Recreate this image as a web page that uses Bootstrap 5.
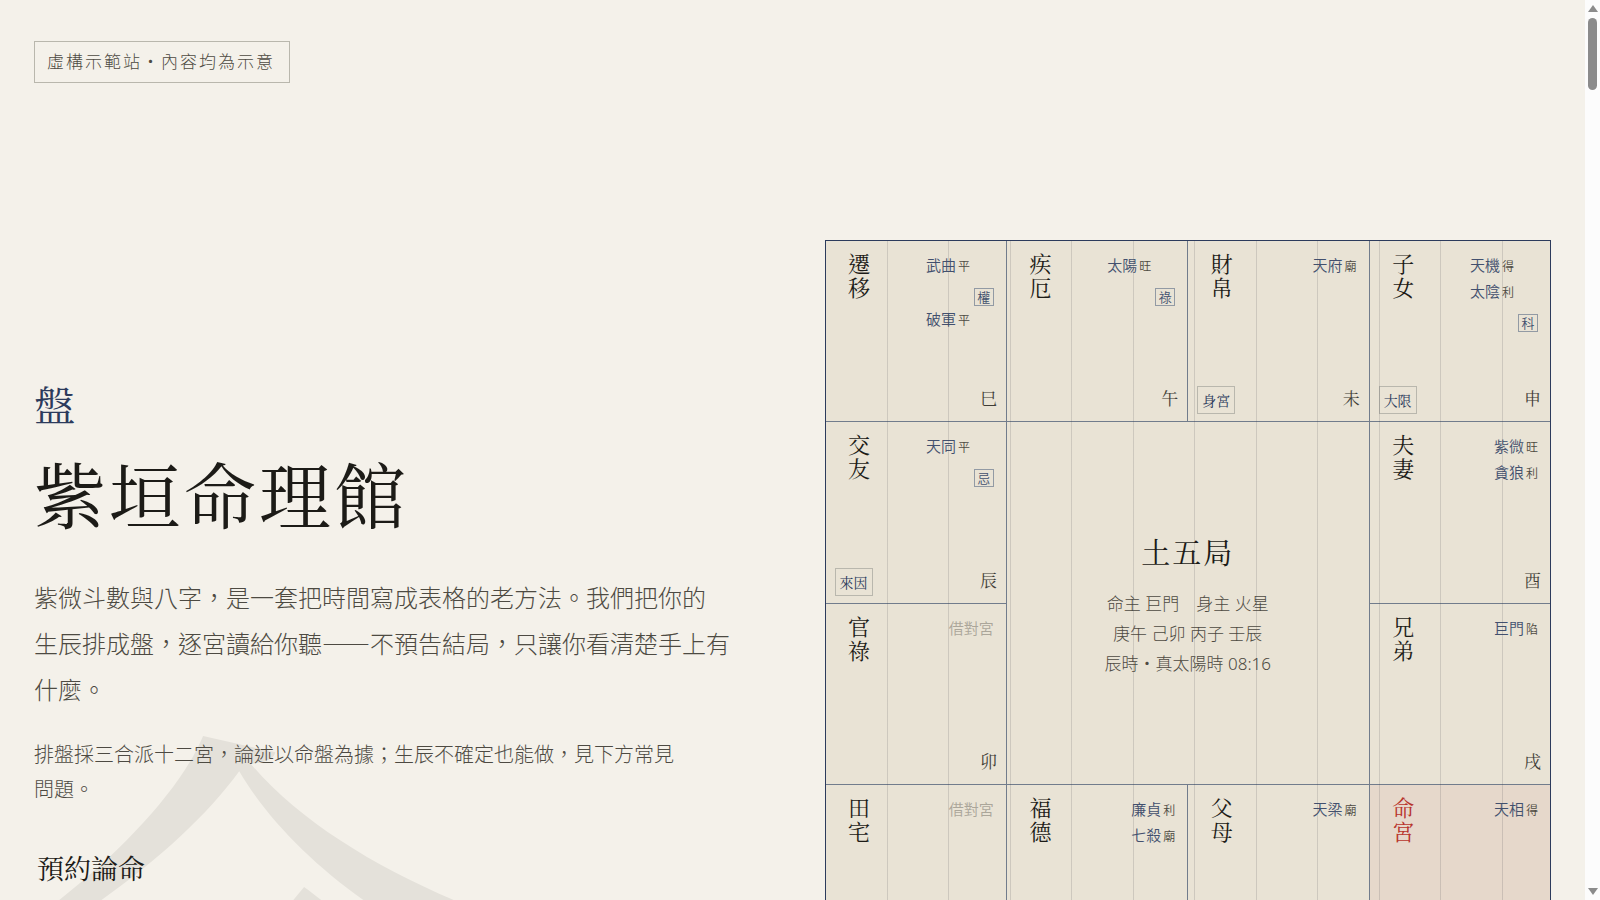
<!DOCTYPE html>
<html lang="zh-Hant">
<head>
<meta charset="utf-8">
<meta name="viewport" content="width=device-width, initial-scale=1">
<title>紫垣命理館</title>
<link rel="stylesheet" href="https://cdn.jsdelivr.net/npm/bootstrap@5.3.0/dist/css/bootstrap.min.css">
<style>
:root {
  --paper: #f4f1ea; --board: #e9e3d5; --ink: #1c1b17; --soft: #4d4a42;
  --navy: #2c3b5c; --rule: #717c8c; --hair: #b9b7ad; --seal: #b8352d;
  --serif: "Noto Serif CJK TC", "Noto Serif TC", "Noto Sans CJK TC", serif;
}
body { background: var(--paper); color: var(--ink); font-family: "Noto Sans CJK TC", sans-serif; font-weight: 300; }
.song { font-family: var(--serif); font-weight: 400; }
.stage { isolation: isolate; }
.notice { border: 1px solid var(--hair); color: var(--soft); font-size: 17px; line-height: 38px; letter-spacing: 2px; padding: 0 14px 2px 12px; margin: 41px 0 0 34px; }
.hero { grid-template-columns: minmax(0, 1fr) minmax(0, 1fr); column-gap: 64px; padding: 0 34px; margin-top: 157px; }
.intro { padding-top: 134px; }
.emblem { font-size: 41px; line-height: 60px; color: var(--navy); }
.site-title { font-size: 72px; line-height: 96px; letter-spacing: 3px; margin: 10px 0 34px; }
.lede { font-size: 24px; line-height: 46px; color: var(--soft); margin-bottom: 24px; }
.note { font-size: 20px; line-height: 35px; color: var(--soft); margin-bottom: 42px; }
.cta { font-size: 27px; line-height: 40px; color: var(--ink); padding: 0 3px; }
.watermark { left: -79px; top: 683px; font-size: 612px; line-height: 1; color: #e4e1da; z-index: -1; }
.chart { border: 1px solid var(--navy); background: var(--rule); aspect-ratio: 1; grid-template: repeat(4, minmax(0, 1fr)) / repeat(4, minmax(0, 1fr)); gap: 1px; }
.chart::after { content: ""; position: absolute; inset: 0; pointer-events: none;
  background: repeating-linear-gradient(90deg, transparent 0 61px, rgba(60, 60, 70, .16) 61px 62px, transparent 62px 122px, rgba(60, 60, 70, .16) 122px 123px); }
.palace { background: var(--board); padding: 12px 12px 6px; }
.palace.self { background: #e6d8cb; }
.palace.self h2 { color: var(--seal); }
.palace h2 { writing-mode: vertical-rl; font-size: 22px; line-height: 42px; letter-spacing: 2px; margin: 0; }
.stars { font-size: 15px; line-height: 26px; font-weight: 350; color: #42506e; margin-top: -1px; }
.stars.wide { width: 68px; }
.stars small { font-size: 12px; line-height: 1; color: var(--soft); margin-left: 2px; }
.stars .hua { border: 1px solid #929aa4; width: 20px; height: 18px; font-size: 13px; line-height: 16px; text-align: center; margin: 10px 0 0 auto; }
.stars .empty { color: #aba69a; }
.foot { margin: auto -3px 0; }
.branch { font-size: 17px; line-height: 34px; color: #3f3d36; }
.mark-tag { border: 1px solid var(--hair); font-size: 14px; line-height: 26px; color: var(--navy); padding: 0 4px; margin-top: 4px; }
.centre { grid-area: 2 / 2 / 4 / 4; background: var(--board); font: 300 17px/30px "Noto Sans", "Noto Sans CJK TC", sans-serif; color: var(--soft); }
.centre h2 { font-size: 29px; line-height: 44px; letter-spacing: 2px; color: var(--ink); margin: 2px 0 15px; }
.scroll-rail { width: 15px; background: #fcfcfc; padding: 5px 0; }
.scroll-thumb { width: 9px; height: 72px; border-radius: 5px; background: #8b8b8b; margin: 6px 0 auto; }
</style>
</head>
<body>
<div class="d-flex vh-100 overflow-hidden">
  <main class="stage position-relative flex-grow-1 overflow-hidden">
    <span class="watermark song position-absolute" aria-hidden="true">命</span>
    <div class="d-flex"><div class="notice">虛構示範站・內容均為示意</div></div>
    <div class="hero d-grid align-items-start">
      <section class="intro">
        <div class="emblem song">盤</div>
        <h1 class="site-title song">紫垣命理館</h1>
        <p class="lede">紫微斗數與八字，是一套把時間寫成表格的老方法。我們把你的<br>生辰排成盤，逐宮讀給你聽——不預告結局，只讓你看清楚手上有<br>什麼。</p>
        <p class="note">排盤採三合派十二宮，論述以命盤為據；生辰不確定也能做，見下方常見<br>問題。</p>
        <a class="cta song d-inline-block text-decoration-none" href="#booking">預約論命</a>
      </section>
      <section class="chart d-grid position-relative" aria-label="命盤">
        <article class="palace d-flex flex-column">
          <div class="d-flex justify-content-between align-items-start"><h2 class="song">遷移</h2>
            <ul class="stars wide list-unstyled mb-0"><li>武曲<small>平</small><div class="hua">權</div></li><li>破軍<small>平</small></li></ul></div>
          <div class="foot d-flex align-items-center"><span class="branch song ms-auto">巳</span></div>
        </article>
        <article class="palace d-flex flex-column">
          <div class="d-flex justify-content-between align-items-start"><h2 class="song">疾厄</h2>
            <ul class="stars wide list-unstyled mb-0"><li>太陽<small>旺</small><div class="hua">祿</div></li></ul></div>
          <div class="foot d-flex align-items-center"><span class="branch song ms-auto">午</span></div>
        </article>
        <article class="palace d-flex flex-column">
          <div class="d-flex justify-content-between align-items-start"><h2 class="song">財帛</h2>
            <ul class="stars list-unstyled mb-0"><li>天府<small>廟</small></li></ul></div>
          <div class="foot d-flex align-items-center"><span class="mark-tag song">身宮</span><span class="branch song ms-auto">未</span></div>
        </article>
        <article class="palace d-flex flex-column">
          <div class="d-flex justify-content-between align-items-start"><h2 class="song">子女</h2>
            <ul class="stars wide list-unstyled mb-0"><li>天機<small>得</small></li><li>太陰<small>利</small><div class="hua">科</div></li></ul></div>
          <div class="foot d-flex align-items-center"><span class="mark-tag song">大限</span><span class="branch song ms-auto">申</span></div>
        </article>
        <article class="palace d-flex flex-column">
          <div class="d-flex justify-content-between align-items-start"><h2 class="song">交友</h2>
            <ul class="stars wide list-unstyled mb-0"><li>天同<small>平</small><div class="hua">忌</div></li></ul></div>
          <div class="foot d-flex align-items-center"><span class="mark-tag song">來因</span><span class="branch song ms-auto">辰</span></div>
        </article>
        <div class="centre d-flex flex-column align-items-center justify-content-center">
          <h2 class="song">土五局</h2>
          <div>命主 巨門　身主 火星</div>
          <div>庚午 己卯 丙子 壬辰</div>
          <div>辰時・真太陽時 08:16</div>
        </div>
        <article class="palace d-flex flex-column">
          <div class="d-flex justify-content-between align-items-start"><h2 class="song">夫妻</h2>
            <ul class="stars list-unstyled mb-0"><li>紫微<small>旺</small></li><li>貪狼<small>利</small></li></ul></div>
          <div class="foot d-flex align-items-center"><span class="branch song ms-auto">酉</span></div>
        </article>
        <article class="palace d-flex flex-column">
          <div class="d-flex justify-content-between align-items-start"><h2 class="song">官祿</h2>
            <ul class="stars list-unstyled mb-0"><li class="empty">借對宮</li></ul></div>
          <div class="foot d-flex align-items-center"><span class="branch song ms-auto">卯</span></div>
        </article>
        <article class="palace d-flex flex-column">
          <div class="d-flex justify-content-between align-items-start"><h2 class="song">兄弟</h2>
            <ul class="stars list-unstyled mb-0"><li>巨門<small>陷</small></li></ul></div>
          <div class="foot d-flex align-items-center"><span class="branch song ms-auto">戌</span></div>
        </article>
        <article class="palace">
          <div class="d-flex justify-content-between align-items-start"><h2 class="song">田宅</h2>
            <ul class="stars list-unstyled mb-0"><li class="empty">借對宮</li></ul></div>
        </article>
        <article class="palace">
          <div class="d-flex justify-content-between align-items-start"><h2 class="song">福德</h2>
            <ul class="stars list-unstyled mb-0"><li>廉貞<small>利</small></li><li>七殺<small>廟</small></li></ul></div>
        </article>
        <article class="palace">
          <div class="d-flex justify-content-between align-items-start"><h2 class="song">父母</h2>
            <ul class="stars list-unstyled mb-0"><li>天梁<small>廟</small></li></ul></div>
        </article>
        <article class="palace self">
          <div class="d-flex justify-content-between align-items-start"><h2 class="song">命宮</h2>
            <ul class="stars list-unstyled mb-0"><li>天相<small>得</small></li></ul></div>
        </article>
      </section>
    </div>
  </main>
  <div class="scroll-rail d-flex flex-column align-items-center flex-shrink-0" aria-hidden="true">
    <svg width="10" height="7" viewBox="0 0 10 7"><path d="M5 0 10 7H0z" fill="#8b8b8b"/></svg>
    <div class="scroll-thumb"></div>
    <svg width="10" height="7" viewBox="0 0 10 7"><path d="M5 7 10 0H0z" fill="#8b8b8b"/></svg>
  </div>
</div>
<script src="https://cdn.jsdelivr.net/npm/bootstrap@5.3.0/dist/js/bootstrap.bundle.min.js"></script>
</body>
</html>
